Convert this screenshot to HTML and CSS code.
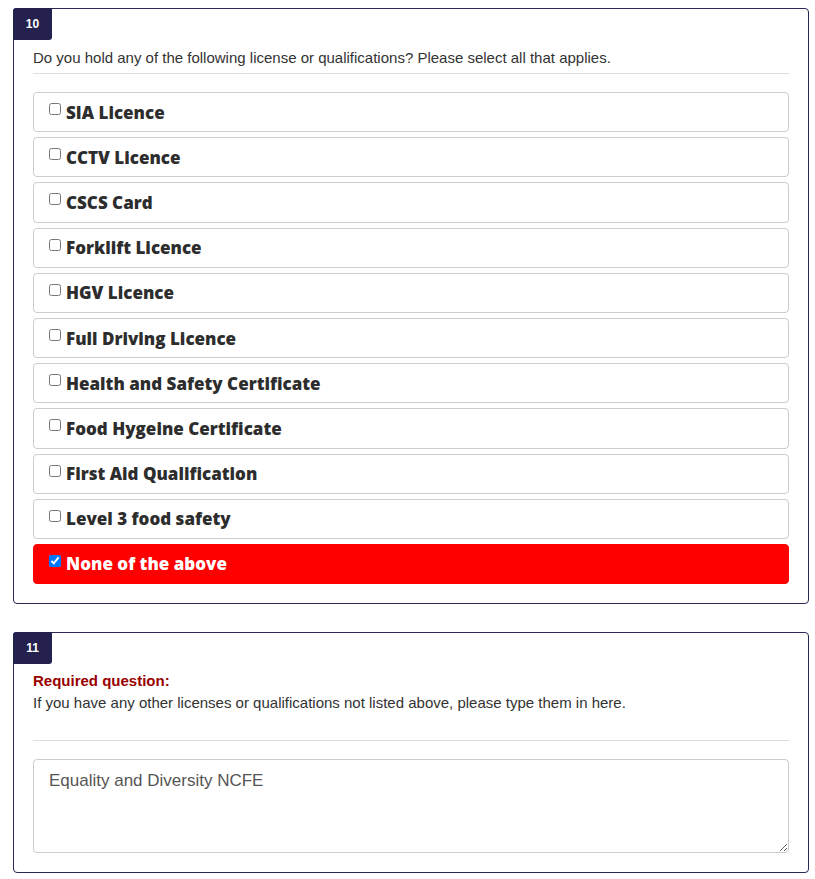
FILE: index.html
```html
<!DOCTYPE html>
<html>
<head>
<meta charset="utf-8">
<link rel="stylesheet" href="styles.css">
</head>
<body>
<div class="page">
  <section class="card">
    <div class="badge">10</div>
    <div class="body">
      <p class="question">Do you hold any of the following license or qualifications? Please select all that applies.</p>
      <hr class="divider">
      <div class="options">
        <label class="option"><input type="checkbox"><span>SIA Licence</span></label>
        <label class="option"><input type="checkbox"><span>CCTV Licence</span></label>
        <label class="option"><input type="checkbox"><span>CSCS Card</span></label>
        <label class="option"><input type="checkbox"><span>Forklift Licence</span></label>
        <label class="option"><input type="checkbox"><span>HGV Licence</span></label>
        <label class="option"><input type="checkbox"><span>Full Driving Licence</span></label>
        <label class="option"><input type="checkbox"><span>Health and Safety Certificate</span></label>
        <label class="option"><input type="checkbox"><span>Food Hygeine Certificate</span></label>
        <label class="option"><input type="checkbox"><span>First Aid Qualification</span></label>
        <label class="option"><input type="checkbox"><span>Level 3 food safety</span></label>
        <label class="option selected"><input type="checkbox" checked><span>None of the above</span></label>
      </div>
    </div>
  </section>
  <section class="card">
    <div class="badge">11</div>
    <div class="body">
      <p class="required">Required question:</p>
      <p class="question2">If you have any other licenses or qualifications not listed above, please type them in here.</p>
      <hr class="divider divider2">
      <textarea class="answer">Equality and Diversity NCFE</textarea>
    </div>
  </section>
</div>
</body>
</html>
```
FILE: styles.css
```css
* { box-sizing: border-box; }
html, body { margin: 0; padding: 0; background: #fff; }
body { font-family: "Liberation Sans", Arial, sans-serif; color: #333; }
.page { padding: 8px 6px 0 13px; display: flex; flex-direction: column; gap: 28px; }
.card {
  border: 1px solid #2b2756;
  border-radius: 4px;
  background: #fff;
}
.badge {
  display: inline-block;
  width: 39px;
  height: 32px;
  margin: -1px 0 0 -1px;
  background: #24214f;
  color: #fff;
  font-weight: bold;
  font-size: 12px;
  line-height: 32px;
  text-align: center;
  border-radius: 3px 0 3px 0;
}
.body { padding: 0 19px 19px 19px; }
.question { margin: 8px 0 0; font-size: 15px; line-height: 20px; }
.divider { border: 0; border-top: 1px solid #ddd; margin: 5px 0 18px; }
.options { display: flex; flex-direction: column; gap: 5px; }
.option {
  display: flex;
  align-items: center;
  height: 40.2px;
  border: 1px solid #ccc;
  border-radius: 4px;
  padding: 0 14px 0 15px;
  font-family: "Open Sans", sans-serif;
  font-weight: 800;
  font-size: 17px;
  color: #2d2d2d;
}
.option input { width: 12px; height: 12px; margin: -6px 5px 0 0; }
.option.selected { background: #ff0000; border-color: #ff0000; color: #fff; }
.required { margin: 7px 0 0; font-size: 15px; font-weight: bold; color: #990000; line-height: 20px; }
.question2 { margin: 2px 0 0; font-size: 15px; line-height: 20px; }
.divider2 { margin: 27px 0 18px; }
.answer {
  display: block;
  width: 100%;
  height: 94px;
  border: 1px solid #ccc;
  border-radius: 4px;
  padding: 10px 15px;
  font-family: "Liberation Sans", Arial, sans-serif;
  font-size: 17px;
  color: #555;
  line-height: 22px;
  resize: vertical;
}
```
